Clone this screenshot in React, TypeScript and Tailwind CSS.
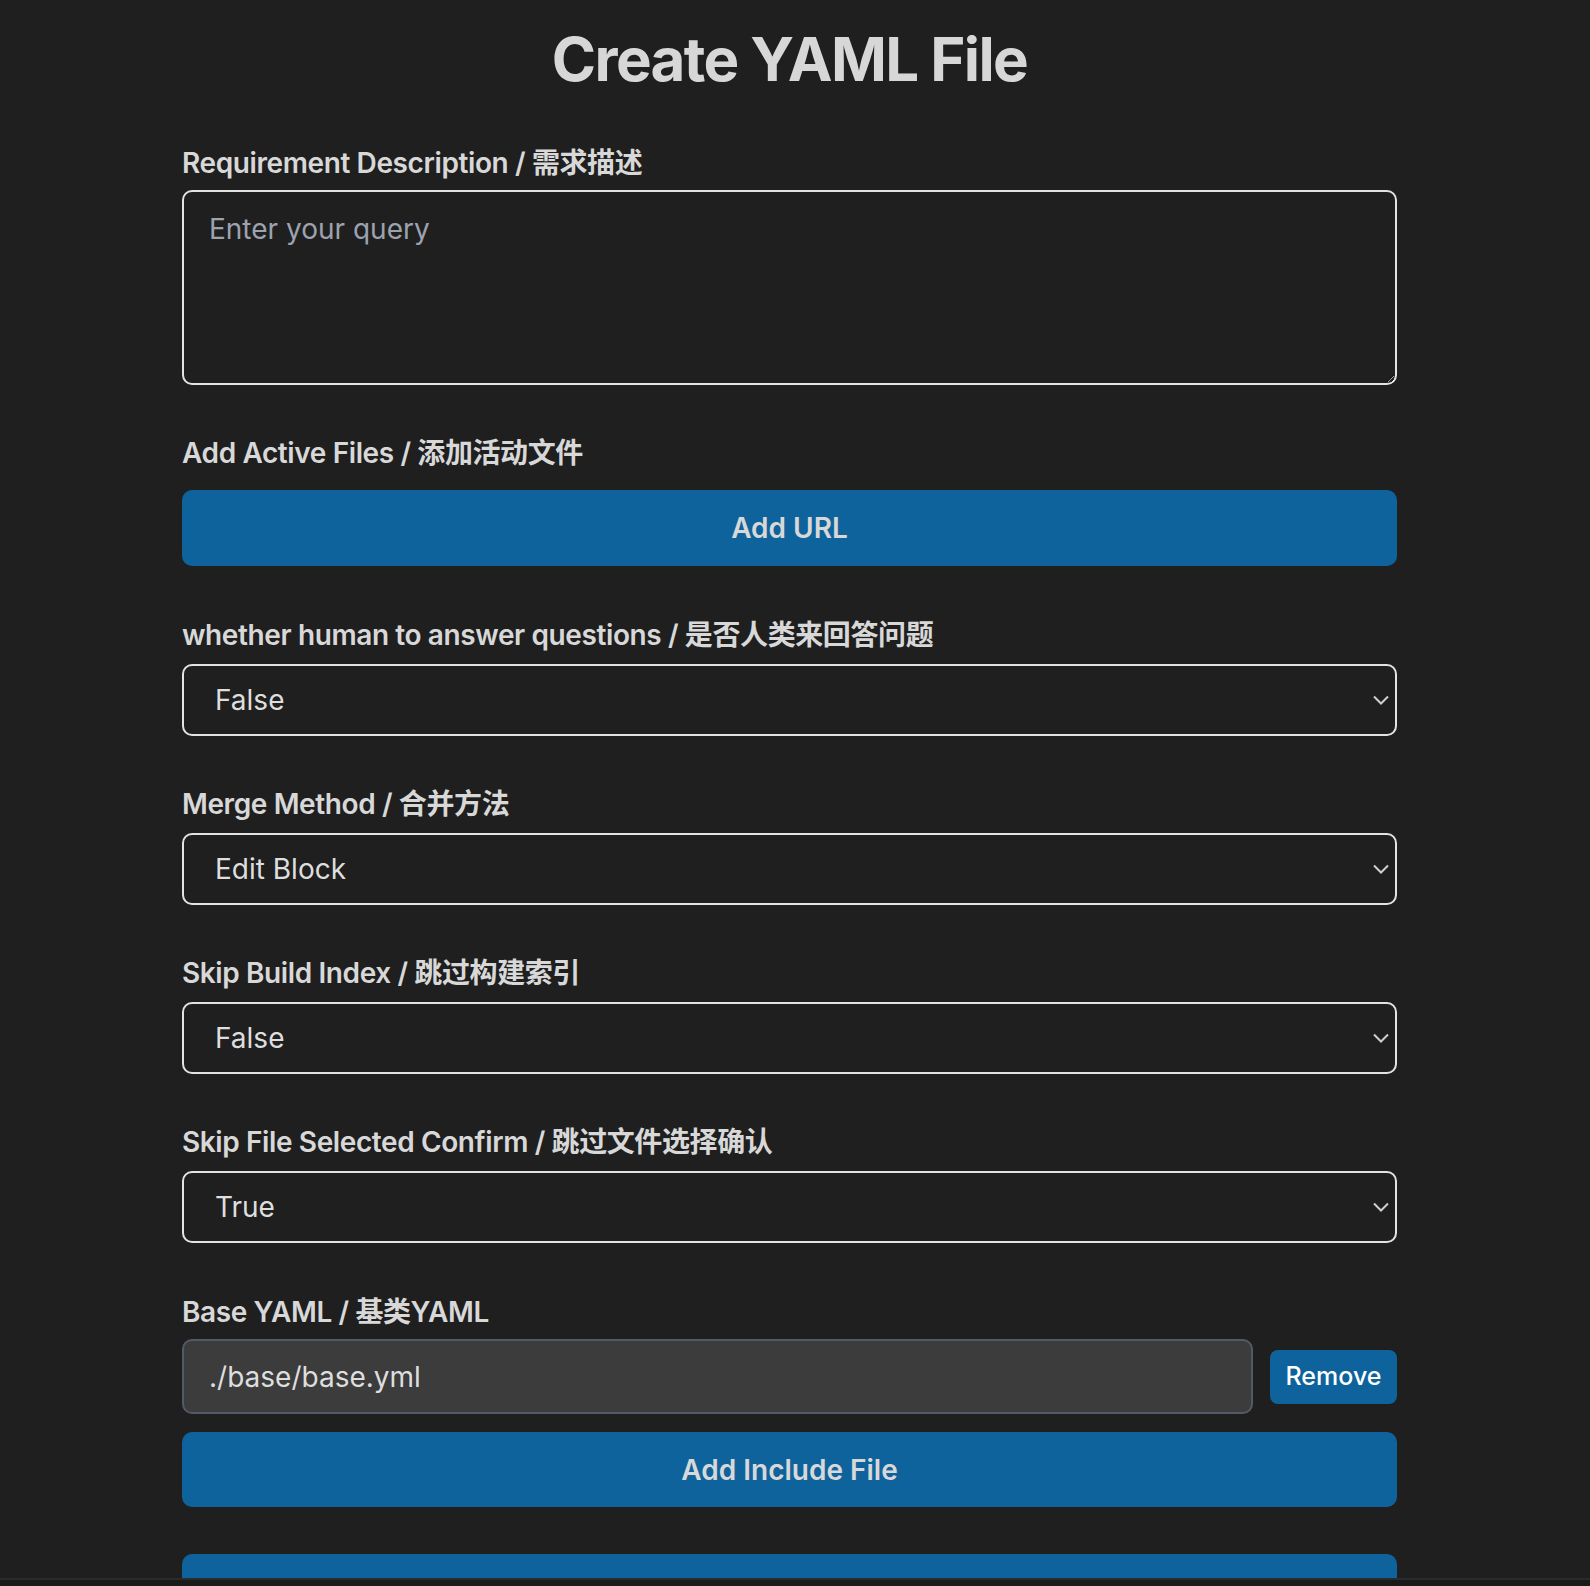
import { useState } from "react";

// ---------------------------
// Small pieces
// ---------------------------
function Label({ children, className = "" }: { children: React.ReactNode; className?: string }) {
  return (
    <div className={`text-[28px] leading-[34px] font-semibold tracking-[-0.014em] text-[#d8d8d8] ${className}`}>
      {children}
    </div>
  );
}

function Select({ value, options }: { value: string; options: string[] }) {
  const [v, setV] = useState(value);
  return (
    <div className="relative mt-[12px]">
      <select
        value={v}
        onChange={(e) => setV(e.target.value)}
        className="block w-full h-[72px] appearance-none rounded-[10px] border-2 border-[#e3e3e3] bg-[#1f1f1f] pl-[31px] pr-[40px] text-[28px] text-[#dedede] outline-none"
      >
        {options.map((o) => (
          <option key={o} value={o}>
            {o}
          </option>
        ))}
      </select>
      <svg
        className="pointer-events-none absolute right-[8px] top-[31px]"
        width="16"
        height="10"
        viewBox="0 0 16 10"
        fill="none"
      >
        <path d="M1 1.5 L8 8.5 L15 1.5" stroke="#d0d0d0" strokeWidth="2" />
      </svg>
    </div>
  );
}

// ---------------------------
// Page
// ---------------------------
export default function App() {
  const [query, setQuery] = useState("");

  return (
    <div className="h-[1586px] flex flex-col bg-[#1f1f1f] font-['Inter','Noto_Sans_CJK_SC',sans-serif]">
      <div className="h-[1578px] overflow-hidden pr-[11px]">
        <div className="mx-auto w-[1215px]">
          <h1 className="pt-[23px] text-center text-[60px] leading-[72px] font-bold tracking-[-0.027em] text-[#d7d7d7]">
            Create YAML File
          </h1>

          {/* Requirement */}
          <Label className="mt-[51px]">Requirement Description / 需求描述</Label>
          <textarea
            value={query}
            onChange={(e) => setQuery(e.target.value)}
            placeholder="Enter your query"
            className="mt-[10px] block w-full h-[195px] rounded-[10px] border-2 border-[#e3e3e3] bg-[#1f1f1f] pl-[25px] pt-[20px] text-[28px] leading-[34px] text-[#dedede] placeholder:text-[#9ca3af] outline-none"
          />

          {/* Active files */}
          <Label className="mt-[51px]">Add Active Files / 添加活动文件</Label>
          <button className="mt-[20px] w-full h-[76px] rounded-[10px] bg-[#0e639c] text-[28px] font-semibold text-[#d8d8d8]">
            Add URL
          </button>

          <Label className="mt-[52px]">whether human to answer questions / 是否人类来回答问题</Label>
          <Select value="False" options={["False", "True"]} />

          <Label className="mt-[51px]">Merge Method / 合并方法</Label>
          <Select value="Edit Block" options={["Edit Block", "Diff", "Whole File"]} />

          <Label className="mt-[51px]">Skip Build Index / 跳过构建索引</Label>
          <Select value="False" options={["False", "True"]} />

          <Label className="mt-[51px]">Skip File Selected Confirm / 跳过文件选择确认</Label>
          <Select value="True" options={["True", "False"]} />

          {/* Base yaml */}
          <Label className="mt-[52px]">Base YAML / 基类YAML</Label>
          <div className="mt-[10px] flex items-center gap-[17px]">
            <input
              readOnly
              value="./base/base.yml"
              className="flex-1 h-[75px] rounded-[10px] border-2 border-[#535a66] bg-[#3c3c3c] pl-[25px] text-[28px] text-[#dedede] outline-none"
            />
            <button className="w-[127px] h-[54px] rounded-[8px] bg-[#0e639c] text-[25px] font-medium text-white">
              Remove
            </button>
          </div>
          <button className="mt-[18px] w-full h-[75px] rounded-[10px] bg-[#0e639c] text-[28px] font-semibold text-[#d8d8d8]">
            Add Include File
          </button>

          {/* submit, cut by the bottom edge */}
          <button aria-label="Create YAML" className="mt-[47px] block w-full h-[75px] rounded-[10px] bg-[#0e639c]" />
        </div>
      </div>
      <div className="flex-1 border-t-2 border-[#2b2b2b] bg-[#1a1a1a]" />
    </div>
  );
}
